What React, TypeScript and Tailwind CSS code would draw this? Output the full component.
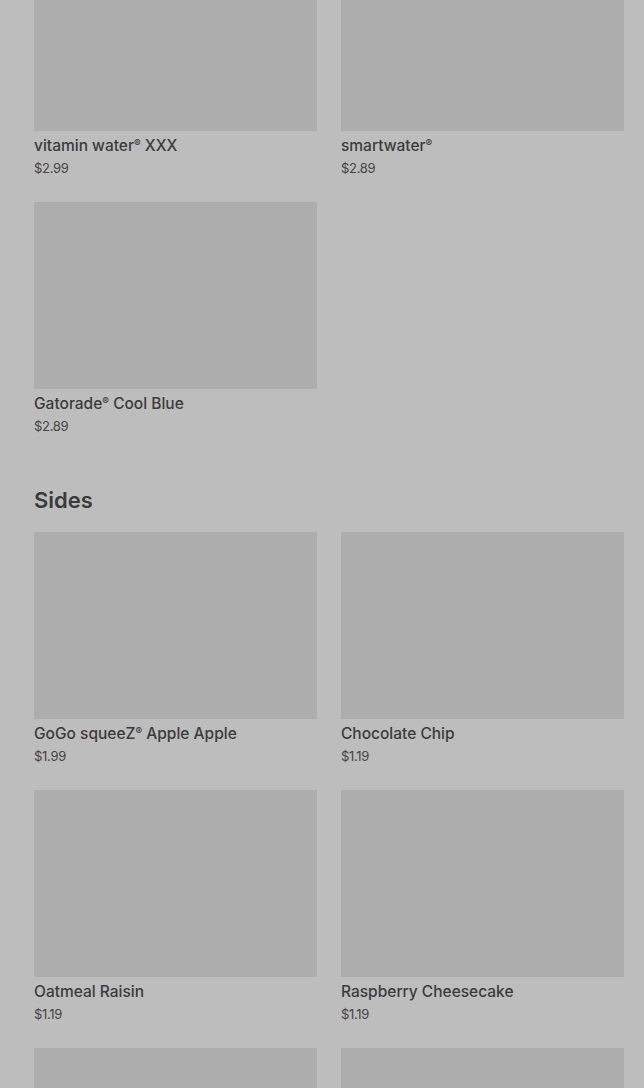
const drinks = [
  { name: "vitamin water® XXX", price: "$2.99" },
  { name: "smartwater®", price: "$2.89" },
  { name: "Gatorade® Cool Blue", price: "$2.89" },
];

const sides = [
  { name: "GoGo squeeZ® Apple Apple", price: "$1.99" },
  { name: "Chocolate Chip", price: "$1.19" },
  { name: "Oatmeal Raisin", price: "$1.19" },
  { name: "Raspberry Cheesecake", price: "$1.19" },
  { name: "", price: "" },
  { name: "", price: "" },
];

type Item = { name: string; price: string };

// render ® a bit smaller and raised, like the reference
function Name({ text }: { text: string }) {
  const parts = text.split("®");
  return (
    <>
      {parts.map((p, i) => (
        <span key={i}>
          {p}
          {i < parts.length - 1 && (
            <span className="relative -top-[4px] text-[10px]">®</span>
          )}
        </span>
      ))}
    </>
  );
}

function ItemCard({ item }: { item: Item }) {
  return (
    <div className="flex flex-col pb-[25px]">
      <div className="h-[187px] w-full bg-[#adadad]" />
      <div className="mt-[5px] h-[20px] text-[15.5px] leading-[20px] font-medium text-[#3b3b3b]">
        <Name text={item.name} />
      </div>
      <div className="mt-[3px] h-[18px] text-[13px] leading-[18px] text-[#454545] tracking-[-0.3px]">
        {item.price}
      </div>
    </div>
  );
}

export default function App() {
  return (
    <div
      className="h-[1088px] w-full overflow-hidden bg-[#bdbdbd]"
      style={{ fontFamily: "Inter, 'Noto Sans', sans-serif" }}
    >
      <div className="-mt-[56px] pl-[34px] pr-[20px]">
        {/* Drinks section (scrolled) */}
        <div className="grid grid-cols-2 gap-x-[24px]">
          {drinks.map((d, i) => (
            <ItemCard key={i} item={d} />
          ))}
        </div>

        {/* Sides */}
        <h2 className="mt-[24px] mb-[16px] text-[22px] leading-[32px] font-semibold text-[#3b3b3b]">
          Sides
        </h2>
        <div className="grid grid-cols-2 gap-x-[24px]">
          {sides.map((s, i) => (
            <ItemCard key={i} item={s} />
          ))}
        </div>
      </div>
    </div>
  );
}
